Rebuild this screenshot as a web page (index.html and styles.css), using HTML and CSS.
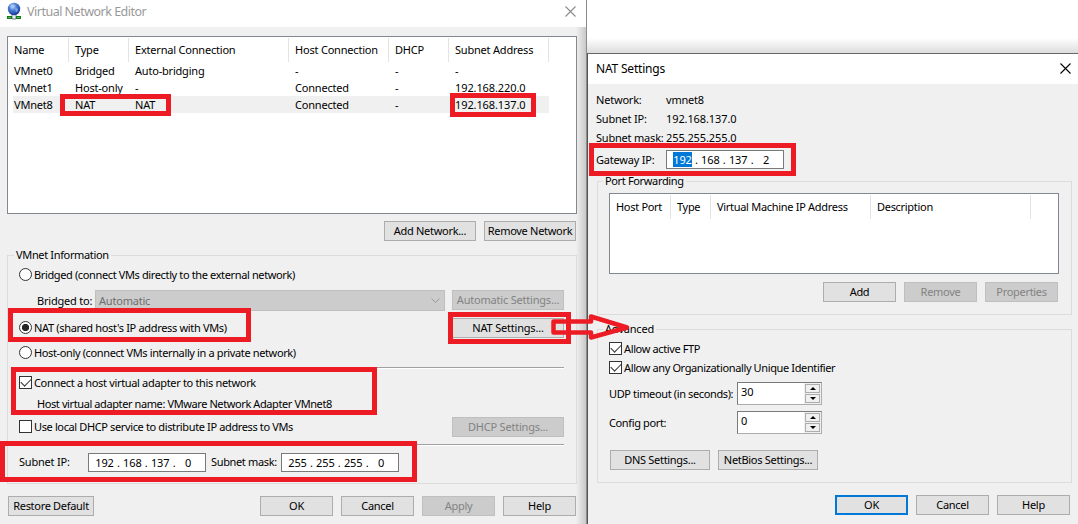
FILE: index.html
```
<!DOCTYPE html>
<html lang="en">

<head>
  <meta charset="UTF-8">
  <meta name="viewport" content="width=device-width, initial-scale=1.0">
  <title>Virtual Network Editor</title>
  <link rel="stylesheet" href="styles.css">
</head>

<body>
  <div class="desktop">
    <div class="window editor">
      <div class="titlebar">
        <svg class="app-icon" width="16" height="18" viewBox="0 0 16 18">
          <defs>
            <radialGradient id="globe" cx="0.4" cy="0.3" r="0.7">
              <stop offset="0" stop-color="#c5ddfb" />
              <stop offset="0.45" stop-color="#4b7dd6" />
              <stop offset="1" stop-color="#12379a" />
            </radialGradient>
          </defs>
          <path d="M1 15.500h14" stroke="#14791a" stroke-width="3" />
          <path d="M2 15.500h3M11 15.500h3" stroke="#3fc63b" stroke-width="1" />
          <path d="M6 12h4v5h-4z" fill="#e4eee4" stroke="#557" stroke-width="0.700" />
          <circle cx="8" cy="7" r="6.200" fill="url(#globe)" />
          <path d="M4 3.500q3-2 4 0t-2 3zM9 6.500q3-1 3 1t-2 3z" fill="#a7c8f2" opacity="0.600" />
        </svg>
        <span class="title">Virtual Network Editor</span>
        <svg class="close" width="11" height="11" viewBox="0 0 11 11">
          <path d="M0.500 0.500l10 10M10.500 0.500l-10 10" />
        </svg>
      </div>
      <div class="editor-body">
        <div class="list net-list">
          <div class="row head"><span>Name</span><span>Type</span><span>External Connection</span><span>Host Connection</span><span>DHCP</span><span>Subnet Address</span></div>
          <div class="row"><span>VMnet0</span><span>Bridged</span><span>Auto-bridging</span><span>-</span><span>-</span><span>-</span></div>
          <div class="row"><span>VMnet1</span><span>Host-only</span><span>-</span><span>Connected</span><span>-</span><span class="num">192.168.220.0</span></div>
          <div class="row selected"><span>VMnet8</span><span>NAT</span><span>NAT</span><span>Connected</span><span>-</span><span class="num">192.168.137.0</span></div>
        </div>
        <div class="buttons net-buttons">
          <button class="btn w92">Add Network...</button>
          <button class="btn w92">Remove Network</button>
        </div>
        <fieldset class="group vmnet">
          <legend>VMnet Information</legend>
          <label class="line l-bridged"><i class="radio"></i>Bridged (connect VMs directly to the external network)</label>
          <div class="line l-auto">
            <span class="lbl">Bridged to:</span>
            <div class="combo">Automatic
              <svg width="9" height="6" viewBox="0 0 9 6"><path d="M0.500 0.500l4 4 4-4" /></svg>
            </div>
            <button class="btn w112" disabled>Automatic Settings...</button>
          </div>
          <div class="line l-nat">
            <label class="opt"><i class="radio on"></i>NAT (shared host's IP address with VMs)</label>
            <button class="btn w112">NAT Settings...</button>
          </div>
          <label class="line l-host"><i class="radio"></i>Host-only (connect VMs internally in a private network)</label>
          <hr>
          <label class="line l-connect"><i class="check on"></i>Connect a host virtual adapter to this network</label>
          <div class="line l-adapter">Host virtual adapter name: VMware Network Adapter VMnet8</div>
          <div class="line l-dhcp">
            <label class="opt"><i class="check"></i>Use local DHCP service to distribute IP address to VMs</label>
            <button class="btn w112" disabled>DHCP Settings...</button>
          </div>
          <hr>
          <div class="line l-subnet">
            <span class="lbl-ip">Subnet IP:</span>
            <div class="ip"><b>192</b>.<b>168</b>.<b>137</b>.<b>0</b></div>
            <span class="lbl-mask">Subnet mask:</span>
            <div class="ip"><b>255</b>.<b>255</b>.<b>255</b>.<b>0</b></div>
          </div>
        </fieldset>
        <div class="buttons footer">
          <button class="btn restore">Restore Default</button>
          <button class="btn">OK</button>
          <button class="btn">Cancel</button>
          <button class="btn" disabled>Apply</button>
          <button class="btn">Help</button>
        </div>
      </div>
    </div>

    <div class="side">
      <div class="window nat">
        <div class="titlebar">
          <span class="title">NAT Settings</span>
          <svg class="close" width="11" height="11" viewBox="0 0 11 11">
            <path d="M0.500 0.500l10 10M10.500 0.500l-10 10" />
          </svg>
        </div>
        <div class="nat-body">
          <div class="info"><span>Network:</span><span>vmnet8</span></div>
          <div class="info"><span>Subnet IP:</span><span class="num">192.168.137.0</span></div>
          <div class="info"><span>Subnet mask:</span><span class="num">255.255.255.0</span></div>
          <div class="info gateway"><span>Gateway IP:</span>
            <div class="ip"><b><mark>192</mark></b>.<b>168</b>.<b>137</b>.<b>2</b></div>
          </div>
          <fieldset class="group ports">
            <legend>Port Forwarding</legend>
            <div class="list port-list">
              <div class="row head"><span>Host Port</span><span>Type</span><span>Virtual Machine IP Address</span><span>Description</span></div>
            </div>
            <div class="buttons">
              <button class="btn">Add</button>
              <button class="btn" disabled>Remove</button>
              <button class="btn" disabled>Properties</button>
            </div>
          </fieldset>
          <fieldset class="group advanced">
            <legend>Advanced</legend>
            <label class="line"><i class="check on"></i>Allow active FTP</label>
            <label class="line"><i class="check on"></i>Allow any Organizationally Unique Identifier</label>
            <div class="line field">
              <span>UDP timeout (in seconds):</span>
              <div class="spin">30<div class="arrows"><i class="up"></i><i class="down"></i></div></div>
            </div>
            <div class="line field">
              <span>Config port:</span>
              <div class="spin">0<div class="arrows"><i class="up"></i><i class="down"></i></div></div>
            </div>
            <div class="buttons">
              <button class="btn w100">DNS Settings...</button>
              <button class="btn w100">NetBios Settings...</button>
            </div>
          </fieldset>
          <div class="buttons footer">
            <button class="btn default">OK</button>
            <button class="btn">Cancel</button>
            <button class="btn">Help</button>
          </div>
        </div>
      </div>
    </div>

    <!-- red markers over the two dialogs -->
    <svg class="marks" width="1078" height="524" viewBox="0 0 1078 524">
      <rect x="62.500" y="96.500" width="106" height="17" />
      <rect x="452.500" y="95.500" width="81" height="19" />
      <rect x="10.500" y="310.500" width="238" height="29" />
      <rect x="450.500" y="314.500" width="118" height="27" />
      <rect x="13.500" y="369.500" width="361" height="43" />
      <rect x="2.500" y="443.500" width="412" height="36" />
      <rect x="591.500" y="145.500" width="202" height="28" />
      <path class="arrow" d="M553.500 321.500H591V316.500L627 327.500L591 337.500V332.500H553.500Z" />
    </svg>
  </div>
</body>

</html>
```
FILE: styles.css
```
body,
html {
  margin: 0;
  padding: 0;
  overflow: hidden;
}

body {
  font-family: "Noto Sans", "Open Sans", sans-serif;
  font-size: 11px;
  letter-spacing: -0.2px;
  color: #000;
}

.desktop {
  position: relative;
  display: flex;
  width: 1078px;
  height: 524px;
  background: #fff;
  overflow: hidden;
}

.window,
.window * {
  box-sizing: border-box;
}

.window {
  background: #f0f0f0;
  white-space: nowrap;
}

.titlebar {
  display: flex;
  align-items: center;
  background: #fff;
}

.title {
  flex: 1;
  font-size: 12px;
}

.close {
  fill: none;
  stroke: #000;
  stroke-width: 1.1;
}

/* left dialog */
.editor {
  width: 587px;
  height: 524px;
  border-right: 1px solid #8b8b8b;
}

.editor .titlebar {
  height: 27px;
  padding: 0 10px 5px 6px;
}

.editor .title {
  margin-left: 5px;
  font-size: 12.5px;
  letter-spacing: -0.5px;
  color: #999;
}

.editor .close {
  stroke: #8a8a8a;
}

.editor-body {
  height: 497px;
  padding: 9px 9px 0 7px;
  background: linear-gradient(to right, #f0f0f0 576px, #c9c9c9 586px);
}

.list {
  background: #fff;
  border: 1px solid #828790;
}

.row {
  display: grid;
  height: 17px;
  line-height: 17px;
}

.row span {
  padding-left: 6px;
}

.row.head {
  height: 24px;
  line-height: 24px;
}

.row.head span {
  border-right: 1px solid #e3e3e3;
}

.net-list {
  height: 178px;
  padding: 1px 0 0 5px;
}

.net-list .row {
  grid-template-columns: 56px 60px 160px 100px 60px 100px;
  width: 536px;
}

.net-list .row span:first-child {
  padding-left: 1px;
}

.selected {
  background: #f0f0f0;
}

.buttons {
  display: flex;
  gap: 8px;
}

.btn {
  width: 73px;
  height: 20px;
  padding: 0;
  border: 1px solid #adadad;
  background: #e1e1e1;
  color: #000;
  font: inherit;
  letter-spacing: -0.3px;
  line-height: 18px;
  text-align: center;
}

.btn:disabled {
  border-color: #bfbfbf;
  background: #ccc;
  color: #838383;
}

.btn.default {
  border: 2px solid #0078d7;
  line-height: 16px;
}

.w92 {
  width: 92px;
}

.w100 {
  width: 100px;
}

.w112 {
  width: 112px;
  letter-spacing: -0.2px;
}

.net-buttons {
  justify-content: flex-end;
  margin: 7px 1px 0 0;
}

.group {
  min-width: 0;
  margin: 0;
  padding: 0;
  border: 1px solid #dcdcdc;
}

.group legend {
  height: 14px;
  margin-left: 6px;
  padding: 0 2px;
  line-height: 14px;
}

.vmnet {
  width: 570px;
  height: 236px;
  margin-top: 7px;
}

.vmnet legend {
  letter-spacing: -0.35px;
}

.line {
  display: flex;
  align-items: center;
  letter-spacing: -0.37px;
}

.opt {
  display: flex;
  flex: 1;
  align-items: center;
}

.vmnet .line {
  height: 20px;
  padding: 0 12px 0 11px;
}

.vmnet .l-bridged {
  margin-top: 2px;
}

.vmnet .l-auto {
  height: 21px;
  margin-top: 6px;
  padding-left: 29px;
  letter-spacing: -0.2px;
}

.l-auto .lbl {
  width: 58px;
  padding-bottom: 1px;
}

.l-auto .btn {
  margin: 0 0 1px 7px;
}

.vmnet .l-nat {
  margin-top: 7px;
}

.l-nat .opt,
.l-dhcp .opt {
  height: 18px;
  margin-bottom: 2px;
}

.l-nat .opt {
  letter-spacing: -0.33px;
}

.vmnet .l-host {
  margin-top: 4px;
}

.vmnet hr {
  height: 2px;
  margin: 5px 12px 0 11px;
  border: 0;
  border-top: 1px solid #a0a0a0;
  border-bottom: 1px solid #fff;
}

.vmnet .l-connect {
  margin-top: 3px;
  letter-spacing: -0.33px;
}

.vmnet .l-adapter {
  margin-top: 1px;
  padding-left: 29px;
  letter-spacing: -0.4px;
}

.vmnet .l-dhcp {
  margin-top: 4px;
}

.vmnet .l-dhcp + hr {
  margin-top: 7px;
}

.vmnet .l-subnet {
  margin-top: 6px;
  letter-spacing: -0.2px;
}

.lbl-ip,
.lbl-mask {
  padding-bottom: 2px;
}

.lbl-ip {
  width: 69px;
}

.lbl-mask {
  width: 70px;
  margin-left: 5px;
  letter-spacing: -0.35px;
}

.combo {
  display: flex;
  flex: 1;
  align-items: center;
  justify-content: space-between;
  height: 21px;
  padding: 0 4px 0 3px;
  border: 1px solid #bfbfbf;
  background: #ccc;
  color: #6d6d6d;
}

.combo svg {
  fill: none;
  stroke: #9a9a9a;
}

.radio,
.check {
  flex: none;
  width: 13px;
  height: 13px;
  margin-right: 2px;
  border: 1px solid #333;
  background: #fff;
}

.radio {
  border-radius: 50%;
}

.radio.on {
  background: radial-gradient(circle, #262626 3.3px, #fff 4px);
}

.check.on::after {
  content: "";
  display: block;
  width: 9px;
  height: 5px;
  margin: 1px 0 0 1px;
  border: solid #333;
  border-width: 0 0 1.3px 1.3px;
  transform: rotate(-45deg);
}

.ip {
  display: flex;
  width: 118px;
  height: 19px;
  padding-left: 3px;
  border: 1px solid #7a7a7a;
  background: #fff;
  line-height: 17px;
  letter-spacing: -0.1px;
}

.ip b {
  width: 25px;
  font-weight: normal;
  text-align: center;
}

.ip mark {
  background: #0078d7;
  color: #fff;
}

.num {
  letter-spacing: -0.1px;
}

.editor .footer {
  margin-top: 12px;
  padding-left: 1px;
}

.restore {
  width: 86px;
  margin-right: auto;
}

.editor .footer .btn:last-child {
  margin-right: 1px;
}

/* right dialog */
.side {
  flex: 1;
  padding-top: 53px;
  background: linear-gradient(#fff 38px, #dcdcdc 53px);
}

.nat {
  height: 471px;
  border-top: 1px solid #666;
  border-left: 1px solid #555;
}

.nat .titlebar {
  height: 30px;
  padding: 0 8px 2px;
}

.nat-body {
  padding: 6px 7px 0 8px;
}

.info {
  display: flex;
  align-items: center;
  height: 19px;
}

.info > span:first-child {
  width: 70px;
}

.gateway {
  height: 24px;
}

.ports {
  width: 475px;
  height: 134px;
  margin: 3px 0 0 1px;
  padding: 0 12px 0 11px;
}

.port-list {
  height: 81px;
  margin-top: 5px;
  padding-top: 1px;
}

.port-list .row {
  grid-template-columns: 61px 40px 160px 160px;
  letter-spacing: -0.3px;
}

.ports .buttons {
  justify-content: flex-end;
  margin-top: 8px;
  padding-right: 1px;
}

.advanced {
  width: 475px;
  height: 161px;
  margin: 7px 0 0 1px;
  padding: 0 11px;
}

.ports {
  height: 141px;
}

.advanced .line {
  height: 19px;
}

.advanced legend + .line {
  margin-top: 3px;
}

.ports legend,
.advanced legend {
  margin-left: -6px;
}

.ports legend {
  letter-spacing: -0.35px;
}

.advanced .field {
  height: 23px;
  margin-top: 5px;
}

.advanced .field + .field {
  margin-top: 6px;
}

.field > span {
  width: 128px;
}

.spin {
  display: flex;
  justify-content: space-between;
  width: 85px;
  height: 23px;
  padding-left: 3px;
  border: 1px solid #adadad;
  border-top-color: #7a7a7a;
  border-left-color: #7a7a7a;
  background: #fff;
  line-height: 18px;
  letter-spacing: -0.1px;
}

.arrows {
  display: flex;
  flex-direction: column;
  gap: 1px;
  width: 17px;
  padding: 1px;
  background: #f0f0f0;
}

.arrows i {
  display: flex;
  flex: 1;
  align-items: center;
  justify-content: center;
  border: 1px solid #adadad;
}

.arrows i::after {
  content: "";
  border: solid transparent;
  border-width: 0 3px 3px;
  border-bottom-color: #000;
}

.arrows .down::after {
  border-width: 3px 3px 0;
  border-top-color: #000;
}

.advanced .buttons {
  margin: 16px 0 0 1px;
}

.nat .footer {
  justify-content: flex-end;
  margin-top: 12px;
  padding-right: 1px;
}

.nat .footer .btn:last-child {
  margin-right: 1px;
}

.marks {
  position: absolute;
  top: 0;
  left: 0;
  fill: none;
  stroke: #ed1c24;
  stroke-width: 5;
  pointer-events: none;
}

.marks .arrow {
  stroke-width: 4.5;
  stroke-linejoin: round;
}
```
